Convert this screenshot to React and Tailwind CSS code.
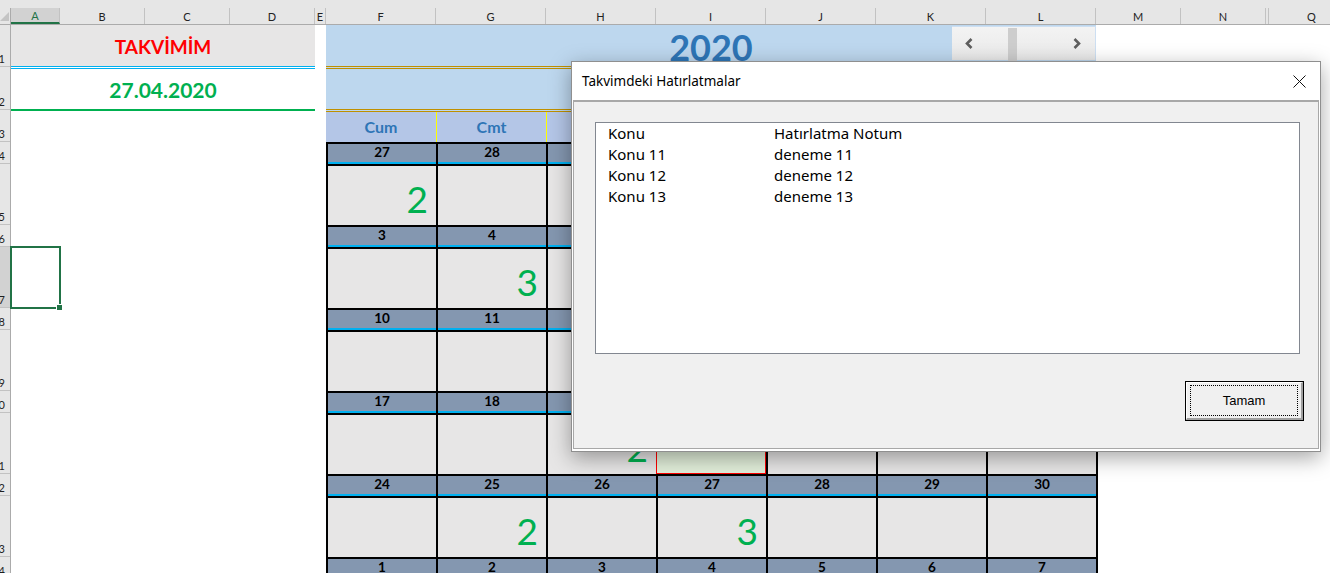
import React from "react";

const colHeads = [
  ["A", "w-[49px]"],
  ["B", "w-[85px]"],
  ["C", "w-[85px]"],
  ["D", "w-[85px]"],
  ["E", "w-[11px]"],
  ["F", "w-[110px]"],
  ["G", "w-[110px]"],
  ["H", "w-[110px]"],
  ["I", "w-[110px]"],
  ["J", "w-[110px]"],
  ["K", "w-[110px]"],
  ["L", "w-[110px]"],
  ["M", "w-[85px]"],
  ["N", "w-[85px]"],
];

const rowHeads = [
  [1, "h-[42px]"],
  [2, "h-[43px]"],
  [3, "h-[32px]"],
  [4, "h-[22px]"],
  [5, "h-[61px]"],
  [6, "h-[22px]"],
  [7, "h-[61px]"],
  [8, "h-[22px]"],
  [9, "h-[61px]"],
  [10, "h-[22px]"],
  [11, "h-[61px]"],
  [12, "h-[22px]"],
  [13, "h-[61px]"],
  [14, "h-[22px]"],
];

const dayNames = ["Cum", "Cmt", "Paz", "Pzt", "Sal", "Çar", "Per"];

const weeks = [
  { days: [27, 28, 29, 30, 31, 1, 2], marks: { 0: 2 } },
  { days: [3, 4, 5, 6, 7, 8, 9], marks: { 1: 3 } },
  { days: [10, 11, 12, 13, 14, 15, 16], marks: {} },
  { days: [17, 18, 19, 20, 21, 22, 23], marks: { 2: 2 }, picked: 3 },
  { days: [24, 25, 26, 27, 28, 29, 30], marks: { 1: 2, 3: 3 } },
  { days: [1, 2, 3, 4, 5, 6, 7], marks: {}, headOnly: true },
];

const reminders = [
  ["Konu", "Hatırlatma Notum"],
  ["Konu 11", "deneme 11"],
  ["Konu 12", "deneme 12"],
  ["Konu 13", "deneme 13"],
];

function ColumnHeader() {
  return (
    <div className="flex h-[25px] items-end bg-[#e6e6e6]">
      <div className="flex h-[17px] w-full border-b border-[#ababab]">
        <div className="relative w-[11px] shrink-0 border-r border-[#ababab]">
          <svg width="10" height="12" viewBox="0 0 10 12" className="absolute left-0 top-[3px]">
            <polygon points="9,1 9,10 0,10" fill="#c4c4c4" />
          </svg>
        </div>
        {colHeads.map(([id, w]) => (
          <div
            key={id}
            className={`${w} shrink-0 flex items-center justify-center border-r border-[#c2c2c2] text-[11px] leading-none ${
              id === "A" ? "bg-[#d2d2d2] border-b-2 border-b-[#217346] text-[#217346]" : "text-[#222]"
            }`}
          >
            {id}
          </div>
        ))}
        <div className="w-[3px] shrink-0 border-r border-[#c2c2c2]" />
        <div className="w-[85px] shrink-0 flex items-center justify-center text-[11px] leading-none text-[#222]">
          Q
        </div>
      </div>
    </div>
  );
}

function RowHeader() {
  return (
    <div className="w-[11px] shrink-0 overflow-hidden border-r border-[#ababab] bg-[#e6e6e6]">
      {rowHeads.map(([n, h]) => (
        <div
          key={n}
          className={`${h} shrink-0 flex items-end border-b border-[#c2c2c2] ${n === 7 ? "bg-[#d2d2d2]" : ""}`}
        >
          <span className="-ml-[15px] w-[20px] shrink-0 text-right text-[11px] leading-[15px] text-[#1f1f1f]">
            {n}
          </span>
        </div>
      ))}
    </div>
  );
}

function Spinner() {
  return (
    <div className="absolute left-[626px] top-[1px] flex h-[34px] w-[144px] items-center bg-gradient-to-b from-[#f3f3f3] to-[#e9e9e9] border-t border-r border-[#cddff2] pl-[13px] pr-[14px]">
      <svg width="8" height="11" viewBox="0 0 8 11">
        <polyline points="6.5,1 2,5.5 6.5,10" fill="none" stroke="#5e5e5e" strokeWidth="2.6" />
      </svg>
      <div className="ml-[35px] mt-[1px] h-[33px] w-[9px] self-start bg-[#cdcdcd]" />
      <div className="flex-1" />
      <svg width="8" height="11" viewBox="0 0 8 11">
        <polyline points="1.5,1 6,5.5 1.5,10" fill="none" stroke="#5e5e5e" strokeWidth="2.6" />
      </svg>
    </div>
  );
}

function Calendar() {
  return (
    <div className="w-[772px] shrink-0 flex flex-col">
      <div className="relative flex h-[44px] w-[770px] shrink-0 items-center justify-center border-b-[3px] border-double border-[#bf9000] bg-[#bdd7ee] pt-[2px]">
        <span className="text-[36px] font-bold leading-none text-[#2e75b6]">2020</span>
        <Spinner />
      </div>
      <div className="h-[43px] w-[770px] shrink-0 border-b-[3px] border-double border-[#bf9000] bg-[#bdd7ee]" />
      <div className="flex h-[30px] w-[770px] shrink-0 bg-[#b4c6e7]">
        {dayNames.map((name, i) => (
          <div
            key={name}
            className={`w-[110px] flex items-center justify-center text-[16px] font-bold text-[#2e75b6] ${
              i > 0 ? "border-l border-[#ffff00]" : ""
            }`}
          >
            {name}
          </div>
        ))}
      </div>
      <div className="w-[772px] shrink-0 border-r-2 border-black">
        {weeks.map((week, wi) => (
          <React.Fragment key={wi}>
            <div className="flex">
              {week.days.map((d, i) => (
                <div
                  key={i}
                  className="flex h-[22px] w-[110px] flex-col border-l-2 border-t-2 border-black bg-[#8497b0]"
                >
                  <div className="flex flex-1 items-center justify-center text-[13.5px] font-bold leading-none text-black">
                    {d}
                  </div>
                  <div className="h-[2px] bg-[#00b0f0]" />
                </div>
              ))}
            </div>
            {!week.headOnly && (
              <div className="flex">
                {week.days.map((d, i) =>
                  week.picked === i ? (
                    <div key={i} className="h-[61px] w-[110px] border-t-2 border-black">
                      <div className="h-full w-full border border-[#ff0000] bg-[#e2efda]" />
                    </div>
                  ) : (
                    <div
                      key={i}
                      className="flex h-[61px] w-[110px] items-end justify-end border-l-2 border-t-2 border-black bg-[#e7e6e6] pb-[8px] pr-[8px]"
                    >
                      {week.marks[i] && (
                        <span className="text-[37px] leading-none text-[#00b050]">{week.marks[i]}</span>
                      )}
                    </div>
                  ),
                )}
              </div>
            )}
          </React.Fragment>
        ))}
      </div>
    </div>
  );
}

function ReminderDialog() {
  return (
    <div className="absolute left-[571px] top-[61px] flex h-[391px] w-[750px] flex-col border border-[#8f8f8f] bg-white font-['Noto_Sans',sans-serif] shadow-[0_6px_20px_rgba(0,0,0,0.35)]">
      <div className="flex h-[38px] shrink-0 items-center justify-between pl-[10px] pr-[14px]">
        <span className="text-[13.5px] text-black">Takvimdeki Hatırlatmalar</span>
        <svg width="13" height="13" viewBox="0 0 13 13">
          <line x1="0.5" y1="0.5" x2="12.5" y2="12.5" stroke="#111" strokeWidth="1" />
          <line x1="12.5" y1="0.5" x2="0.5" y2="12.5" stroke="#111" strokeWidth="1" />
        </svg>
      </div>
      <div className="mx-[1px] mb-[2px] flex flex-1 flex-col border border-t-2 border-[#a8a8a8] bg-[#f0f0f0] pl-[21px] pt-[20px]">
        <div className="h-[232px] w-[705px] shrink-0 border border-[#828790] bg-white pl-[12px]">
          {reminders.map(([topic, note]) => (
            <div key={topic} className="flex h-[21px] items-center text-[15px] leading-[21px] text-black">
              <span className="w-[166px] shrink-0">{topic}</span>
              <span>{note}</span>
            </div>
          ))}
        </div>
        <div className="mt-[27px] flex justify-end pr-[14px]">
          <button className="h-[40px] w-[119px] border border-black bg-[#f0f0f0] p-0 font-['Liberation_Sans',Arial,sans-serif]">
            <div className="h-full border-l border-t border-white border-b-2 border-r-2 border-b-[#a0a0a0] border-r-[#a0a0a0] px-[3px] py-[2px]">
              <div className="flex h-full items-center justify-center border border-dotted border-black text-[13px] text-black">
                Tamam
              </div>
            </div>
          </button>
        </div>
      </div>
    </div>
  );
}

export default function App() {
  return (
    <div className="relative h-[573px] w-[1330px] overflow-hidden bg-white font-['Lato','Open_Sans',sans-serif]">
      <ColumnHeader />
      <div className="flex h-[548px] items-start overflow-hidden">
        <RowHeader />
        <div className="flex w-[304px] shrink-0 flex-col">
          <div className="flex h-[44px] shrink-0 items-center justify-center border-b-[3px] border-double border-[#00b0f0] bg-[#e7e6e6] bg-clip-padding pt-[2px]">
            <span className="text-[19px] font-bold leading-none text-[#ff0000]">TAKVİMİM</span>
          </div>
          <div className="flex h-[42px] shrink-0 items-center justify-center border-b-2 border-[#00b050]">
            <span className="text-[21px] font-bold leading-none text-[#00b050]">27.04.2020</span>
          </div>
          <div className="h-[135px] shrink-0" />
          <div className="relative -ml-[1px] h-[63px] w-[51px] shrink-0 border-2 border-[#217346]">
            <div className="absolute -bottom-[4px] -right-[4px] h-[7px] w-[7px] border border-white bg-[#217346]" />
          </div>
        </div>
        <div className="w-[11px] shrink-0" />
        <Calendar />
        <div className="flex-1" />
      </div>
      <ReminderDialog />
    </div>
  );
}
